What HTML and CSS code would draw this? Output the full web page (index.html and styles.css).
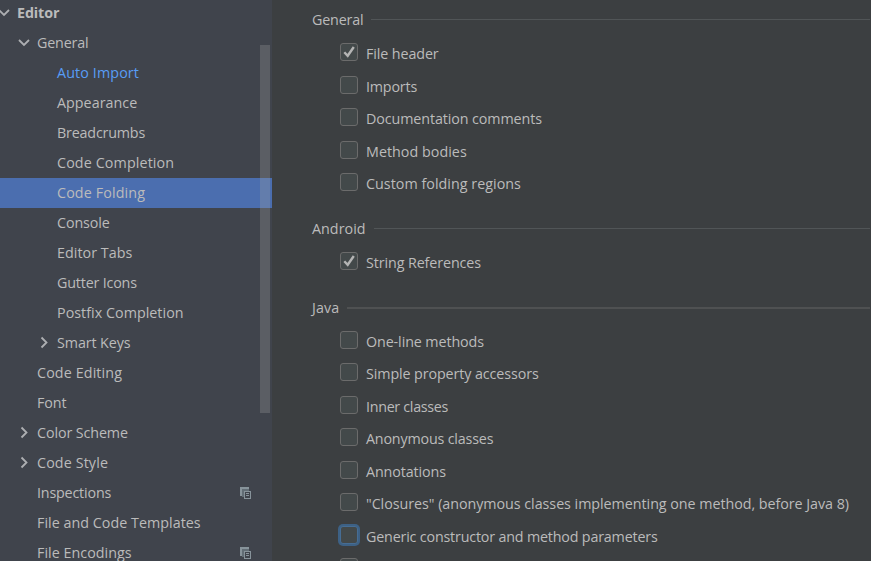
FILE: index.html
```html
<!DOCTYPE html>
<html lang="en">
<head>
<meta charset="utf-8">
<title>Settings - Code Folding</title>
<link rel="stylesheet" href="styles.css">
</head>
<body>
<svg class="defs" width="0" height="0">
  <symbol id="down" viewBox="0 0 16 16"><path d="M3 5 8 10 13 5"/></symbol>
  <symbol id="right" viewBox="0 0 16 16"><path d="M5.5 2.5 10.5 7.5 5.5 12.5"/></symbol>
  <symbol id="copy" viewBox="0 0 11 12"><path fill="#87939a" d="M0 0H9V2H2V9H0Z"/><path fill="#626d75" d="M2 2H9V4H4V10H2Z"/><path fill="#87939a" fill-rule="evenodd" d="M4 4H11V12H4ZM5 5V11H10V5Z"/><path fill="#87939a" d="M6 6H9V7H6ZM6 8H9V9H6Z"/></symbol>
  <symbol id="check" viewBox="0 0 18 18"><path d="M4.3 9.2 7.7 12.8 13.8 4"/></symbol>
</svg>
<div class="settings">
  <nav class="tree">
    <div class="node l0 bold"><svg class="arrow"><use href="#down"/></svg><span>Editor</span></div>
    <div class="node l1"><svg class="arrow"><use href="#down"/></svg><span class="tight">General</span></div>
    <div class="node l2 modified"><span class="loose">Auto Import</span></div>
    <div class="node l2"><span class="semi">Appearance</span></div>
    <div class="node l2"><span class="tight">Breadcrumbs</span></div>
    <div class="node l2"><span class="loose">Code Completion</span></div>
    <div class="node l2 selected"><span class="loose">Code Folding</span></div>
    <div class="node l2"><span>Console</span></div>
    <div class="node l2"><span class="semi">Editor Tabs</span></div>
    <div class="node l2"><span class="tight">Gutter Icons</span></div>
    <div class="node l2"><span class="semi">Postfix Completion</span></div>
    <div class="node l2"><svg class="arrow"><use href="#right"/></svg><span>Smart Keys</span></div>
    <div class="node l1"><span class="loose">Code Editing</span></div>
    <div class="node l1"><span>Font</span></div>
    <div class="node l1"><svg class="arrow"><use href="#right"/></svg><span>Color Scheme</span></div>
    <div class="node l1"><svg class="arrow"><use href="#right"/></svg><span class="loose">Code Style</span></div>
    <div class="node l1"><span class="tight">Inspections</span><svg class="copy"><use href="#copy"/></svg></div>
    <div class="node l1"><span class="semi">File and Code Templates</span></div>
    <div class="node l1"><span class="semi">File Encodings</span><svg class="copy"><use href="#copy"/></svg></div>
    <div class="thumb"></div>
  </nav>
  <main class="panel">
    <section class="group general">
      <h2><span class="tight">General</span></h2>
      <label class="option"><i class="box"><svg><use href="#check"/></svg></i><span>File header</span></label>
      <label class="option"><i class="box"></i><span class="tight">Imports</span></label>
      <label class="option"><i class="box"></i><span>Documentation comments</span></label>
      <label class="option"><i class="box"></i><span class="semi">Method bodies</span></label>
      <label class="option"><i class="box"></i><span class="semi">Custom folding regions</span></label>
    </section>
    <section class="group android">
      <h2><span class="semi">Android</span></h2>
      <label class="option"><i class="box"><svg><use href="#check"/></svg></i><span>String References</span></label>
    </section>
    <section class="group java">
      <h2><span class="loose">Java</span></h2>
      <label class="option"><i class="box"></i><span>One-line methods</span></label>
      <label class="option"><i class="box"></i><span>Simple property accessors</span></label>
      <label class="option"><i class="box"></i><span class="tighter">Inner classes</span></label>
      <label class="option"><i class="box"></i><span class="tight">Anonymous classes</span></label>
      <label class="option"><i class="box"></i><span>Annotations</span></label>
      <label class="option"><i class="box"></i><span class="long">"Closures" (anonymous classes implementing one method, before Java 8)</span></label>
      <label class="option"><i class="box focused"></i><span class="tight">Generic constructor and method parameters</span></label>
      <label class="option"><i class="box"></i></label>
    </section>
  </main>
</div>
</body>
</html>
```
FILE: styles.css
```css
* { box-sizing: border-box; }
body {
  margin: 0;
  overflow: hidden;
  background: #3c3f41;
  color: #bbbbbb;
  font: 14.3px/20px "Open Sans", "Noto Sans", sans-serif;
  letter-spacing: -0.1px;
}
.tighter { letter-spacing: -0.3px; }
.tight { letter-spacing: -0.18px; }
.semi { letter-spacing: 0.03px; }
.loose { letter-spacing: 0.12px; }
.long { letter-spacing: -0.04px; }
.defs { position: absolute; }
.settings { display: flex; height: 561px; overflow: hidden; }
.tree {
  position: relative;
  width: 272px;
  flex: none;
  background: #40444c;
  overflow: hidden;
}
.node {
  display: flex;
  align-items: center;
  height: 30px;
  padding-right: 21px;
  white-space: nowrap;
}
.node:first-child { height: 28px; padding-bottom: 2px; }
.l0 { padding-left: 17px; }
.l1 { padding-left: 37px; }
.l2 { padding-left: 57px; }
.bold { font-weight: 700; }
.modified { color: #589df6; }
.selected { background: #4b6eaf; }
.arrow {
  width: 16px;
  height: 16px;
  flex: none;
  margin-left: -21px;
  margin-right: 5px;
  fill: none;
  stroke: #adafb2;
  stroke-width: 1.8;
}
.copy { width: 11px; height: 12px; margin-left: auto; }
.thumb {
  position: absolute;
  left: 260px;
  top: 45px;
  width: 10px;
  height: 368px;
  background: rgba(166, 166, 166, 0.27);
}
.panel { flex: 1; min-width: 0; padding: 10px 1px 0 40px; }
h2 {
  display: flex;
  align-items: center;
  gap: 8px;
  height: 20px;
  margin: 0 0 9px;
  font-size: inherit;
  font-weight: 400;
}
h2::after { content: ""; flex: 1; height: 1px; background: #515557; margin-bottom: 1px; }
.option {
  display: flex;
  align-items: flex-start;
  gap: 8px;
  height: 32px;
  padding: 4px 0 0 28px;
  white-space: nowrap;
}
.option span { margin-top: 1px; }
.general .option:nth-child(even), .java .option:nth-child(odd) { height: 33px; }
.general { height: 209px; }
.android { height: 79px; }
.java h2::after { height: 2px; background: #4f5152; }
.box {
  width: 18px;
  height: 18px;
  flex: none;
  border: 1px solid #6b6b6b;
  border-radius: 3px;
  background: #43494a;
}
.box svg {
  display: block;
  width: 18px;
  height: 18px;
  margin: -1px;
  fill: none;
  stroke: #b4b4b4;
  stroke-width: 2.4;
}
.focused { border-color: #466d94; box-shadow: 0 0 0 2px #3d6185; }
```
